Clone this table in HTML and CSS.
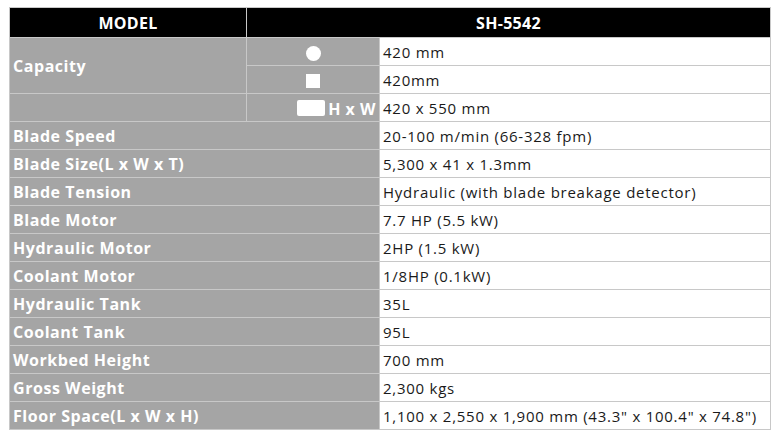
FILE: index.html
```html
<!DOCTYPE html>
<html>
<head>
<meta charset="utf-8">
<link rel="stylesheet" href="styles.css">
</head>
<body>
<table class="spec">
  <colgroup>
    <col class="c-label">
    <col class="c-sub">
    <col class="c-val">
  </colgroup>
  <thead>
    <tr class="head">
      <th>MODEL</th>
      <th colspan="2">SH-5542</th>
    </tr>
  </thead>
  <tbody>
    <tr>
      <td class="lbl" rowspan="2">Capacity</td>
      <td class="sub"><span class="ico circle"></span></td>
      <td class="val">420 mm</td>
    </tr>
    <tr>
      <td class="sub"><span class="ico square"></span></td>
      <td class="val">420mm</td>
    </tr>
    <tr>
      <td class="lbl"></td>
      <td class="sub right"><span class="ico rect"></span><span class="hw">H x W</span></td>
      <td class="val">420 x 550 mm</td>
    </tr>
    <tr><td class="lbl" colspan="2">Blade Speed</td><td class="val">20-100 m/min (66-328 fpm)</td></tr>
    <tr><td class="lbl" colspan="2">Blade Size(L x W x T)</td><td class="val">5,300 x 41 x 1.3mm</td></tr>
    <tr><td class="lbl" colspan="2">Blade Tension</td><td class="val">Hydraulic (with blade breakage detector)</td></tr>
    <tr><td class="lbl" colspan="2">Blade Motor</td><td class="val">7.7 HP (5.5 kW)</td></tr>
    <tr><td class="lbl" colspan="2">Hydraulic Motor</td><td class="val">2HP (1.5 kW)</td></tr>
    <tr><td class="lbl" colspan="2">Coolant Motor</td><td class="val">1/8HP (0.1kW)</td></tr>
    <tr><td class="lbl" colspan="2">Hydraulic Tank</td><td class="val">35L</td></tr>
    <tr><td class="lbl" colspan="2">Coolant Tank</td><td class="val">95L</td></tr>
    <tr><td class="lbl" colspan="2">Workbed Height</td><td class="val">700 mm</td></tr>
    <tr><td class="lbl" colspan="2">Gross Weight</td><td class="val">2,300 kgs</td></tr>
    <tr><td class="lbl" colspan="2">Floor Space(L x W x H)</td><td class="val">1,100 x 2,550 x 1,900 mm (43.3" x 100.4" x 74.8")</td></tr>
  </tbody>
</table>
</body>
</html>
```

FILE: styles.css
```css
html, body {
  background: #ffffff;
}
body {
  margin: 7px 0 0 9px;
  font-family: "Open Sans", "Noto Sans CJK KR", sans-serif;
}
.spec {
  border-collapse: collapse;
  width: 761px;
  table-layout: fixed;
}
.c-label { width: 237px; }
.c-sub { width: 133px; }
.c-val { width: 391px; }
.spec th, .spec td {
  border: 1px solid #c8c8c8;
  padding: 0 3px;
  height: 27px;
  line-height: 20px;
  white-space: nowrap;
  overflow: hidden;
}
.head th {
  background: #000000;
  color: #ffffff;
  font-weight: 700;
  font-size: 16px;
  letter-spacing: 0.3px;
  text-align: center;
  height: 29px;
}
.lbl {
  background: #a5a5a5;
  color: #ffffff;
  font-weight: 700;
  font-size: 16px;
  letter-spacing: 0.55px;
  text-align: left;
}
.sub {
  background: #a5a5a5;
  text-align: center;
  color: #ffffff;
  font-weight: 700;
  font-size: 16px;
  letter-spacing: 0.5px;
  padding: 0 2px;
}
.sub.right {
  text-align: right;
}
.val {
  background: #ffffff;
  color: #1a1a1a;
  font-size: 15px;
  letter-spacing: 0.75px;
}
.ico {
  display: inline-block;
  background: #ffffff;
  vertical-align: middle;
}
.circle {
  width: 15px;
  height: 15px;
  border-radius: 50%;
}
.square {
  width: 14px;
  height: 14px;
}
.rect {
  width: 28px;
  height: 16px;
  border-radius: 2px;
  margin-right: 3px;
}
.hw {
  vertical-align: middle;
}
```
